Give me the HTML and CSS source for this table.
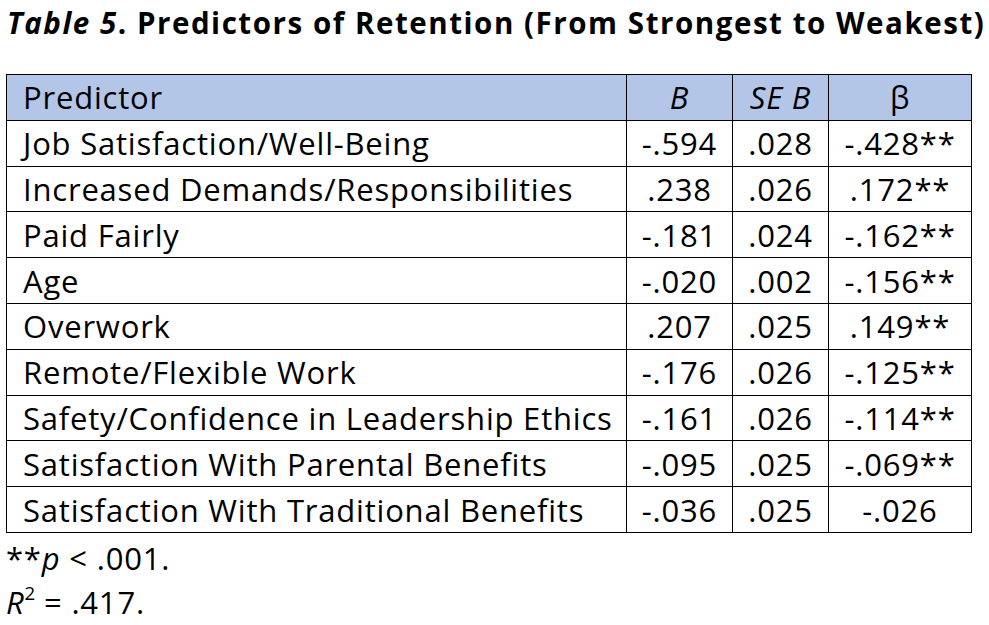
FILE: index.html
```html
<!DOCTYPE html>
<html>
<head>
<meta charset="utf-8">
<link rel="stylesheet" href="styles.css">
</head>
<body>
<h1 class="title"><em>Table 5</em>. Predictors of Retention (From Strongest to Weakest)</h1>
<table class="tbl">
  <thead>
    <tr><th class="name">Predictor</th><th class="c1"><em>B</em></th><th class="c2"><em>SE B</em></th><th class="c3">β</th></tr>
  </thead>
  <tbody>
    <tr><td class="name">Job Satisfaction/Well-Being</td><td>-.594</td><td>.028</td><td>-.428**</td></tr>
    <tr><td class="name">Increased Demands/Responsibilities</td><td>.238</td><td>.026</td><td>.172**</td></tr>
    <tr><td class="name">Paid Fairly</td><td>-.181</td><td>.024</td><td>-.162**</td></tr>
    <tr><td class="name">Age</td><td>-.020</td><td>.002</td><td>-.156**</td></tr>
    <tr><td class="name">Overwork</td><td>.207</td><td>.025</td><td>.149**</td></tr>
    <tr><td class="name">Remote/Flexible Work</td><td>-.176</td><td>.026</td><td>-.125**</td></tr>
    <tr><td class="name">Safety/Confidence in Leadership Ethics</td><td>-.161</td><td>.026</td><td>-.114**</td></tr>
    <tr><td class="name">Satisfaction With Parental Benefits</td><td>-.095</td><td>.025</td><td>-.069**</td></tr>
    <tr><td class="name">Satisfaction With Traditional Benefits</td><td>-.036</td><td>.025</td><td>-.026</td></tr>
  </tbody>
</table>
<div class="notes">
  <p class="note">**<em>p</em> &lt; .001.</p>
  <p class="note"><em>R</em><sup>2</sup> = .417.</p>
</div>
</body>
</html>
```
FILE: styles.css
```css
html, body {
  margin: 0;
  padding: 0;
  background: #ffffff;
}
body {
  font-family: "Open Sans", "Liberation Sans", sans-serif;
  color: #000000;
  padding: 0 0 0 6px;
}
.title {
  margin: 0;
  padding: 3px 0 0 1px;
  font-size: 29.5px;
  font-weight: 700;
  line-height: 40px;
  letter-spacing: 1.55px;
  white-space: nowrap;
}
.title em {
  font-style: italic;
}
.tbl {
  margin-top: 31px;
  border-collapse: collapse;
  width: 966px;
  font-size: 31px;
  letter-spacing: 0.8px;
}
.tbl th, .tbl td {
  border: 1px solid #000000;
  height: 44.8px;
  padding: 0;
  font-weight: 400;
  text-align: center;
  line-height: 44px;
  white-space: nowrap;
}
.tbl thead th {
  background: #b4c6e7;
}
.tbl .name {
  text-align: left;
  padding-left: 16px;
}
.tbl .c1 { width: 105px; }
.tbl .c2 { width: 95px; }
.tbl .c3 { width: 142px; }
.notes {
  padding-top: 3px;
}
.note {
  margin: 0;
  font-size: 31px;
  line-height: 44px;
  letter-spacing: 0.8px;
}
.note sup {
  font-size: 60%;
  line-height: 0;
  letter-spacing: 0;
  vertical-align: 0.75em;
}
```
